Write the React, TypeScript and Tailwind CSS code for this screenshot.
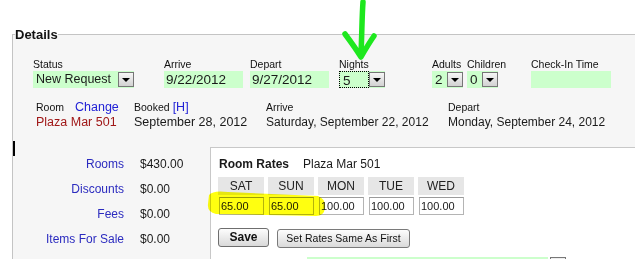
import React from "react";

const green = "bg-[#ccffcc]";

function DropBtn() {
    return (
        <div className="my-[1px] flex h-[15px] w-[16px] shrink-0 items-center justify-center border border-[#767676] bg-linear-to-b from-[#f6f6f6] to-[#d2d2d2]">
            <div className="h-0 w-0 border-x-[4px] border-t-[4px] border-x-transparent border-t-black" />
        </div>
    );
}

function Select({ value, width, focused, small }: { value: string; width: string; focused?: boolean; small?: boolean }) {
    return (
        <div className={`flex h-[17px] ${width} ${green}`}>
            <div
                className={`flex-1 overflow-hidden whitespace-nowrap pl-[3px] leading-[17px] ${small ? "text-[12.5px]" : "text-[13.5px]"} ${
                    focused ? "border border-dotted border-black leading-[15px] pl-[2px]" : ""
                }`}
            >
                {value}
            </div>
            <DropBtn />
        </div>
    );
}

function Label({ children }: { children: React.ReactNode }) {
    return <div className="text-[10.5px] leading-[13px] text-[#111]">{children}</div>;
}

const days = ["SAT", "SUN", "MON", "TUE", "WED"];
const rates = ["65.00", "65.00", "100.00", "100.00", "100.00"];

const totals = [
    { name: "Rooms", amount: "$430.00" },
    { name: "Discounts", amount: "$0.00" },
    { name: "Fees", amount: "$0.00" },
    { name: "Items For Sale", amount: "$0.00" },
];

export default function App() {
    return (
        <div className="relative h-[259px] w-[635px] overflow-hidden bg-white font-['Liberation_Sans',Arial,sans-serif] text-[#1a1a1a]">
            <fieldset className="ml-[12px] mt-[27px] w-[720px] border-l border-t border-[#c4c4c4] bg-[#f6f6f6] pb-[40px]">
                <legend className="ml-[2px] text-[13px] font-bold leading-[15px] text-[#111]">Details</legend>

                {/* reservation fields */}
                <div className="flex pl-[20px] pt-[16px]">
                    <div className="w-[131px]">
                        <Label>Status</Label>
                        <Select value="New Request" width="w-[101px]" small />
                    </div>
                    <div className="w-[86px]">
                        <Label>Arrive</Label>
                        <div className={`h-[17px] w-[79px] pl-[2px] text-[13.5px] leading-[17px] ${green}`}>9/22/2012</div>
                    </div>
                    <div className="w-[89px]">
                        <Label>Depart</Label>
                        <div className={`h-[17px] w-[79px] pl-[2px] text-[13.5px] leading-[17px] ${green}`}>9/27/2012</div>
                    </div>
                    <div className="w-[93px]">
                        <Label>Nights</Label>
                        <Select value="5" width="w-[46px]" focused />
                    </div>
                    <div className="w-[35px]">
                        <Label>Adults</Label>
                        <Select value="2" width="w-[31px]" />
                    </div>
                    <div className="w-[64px]">
                        <Label>Children</Label>
                        <Select value="0" width="w-[31px]" />
                    </div>
                    <div>
                        <Label>Check-In Time</Label>
                        <div className={`h-[17px] w-[80px] ${green}`} />
                    </div>
                </div>

                {/* booking summary */}
                <div className="flex pl-[23px] pt-[12px]">
                    <div className="w-[98px]">
                        <div className="flex items-end leading-[14px]">
                            <span className="text-[10.5px] text-[#111]">Room</span>
                            <span className="ml-[11px] text-[12.5px] text-[#2222d6]">Change</span>
                        </div>
                        <div className="text-[12.5px] leading-[16px] text-[#a01818]">Plaza Mar 501</div>
                    </div>
                    <div className="w-[132px]">
                        <div className="flex items-end leading-[14px]">
                            <span className="text-[10.5px] text-[#111]">Booked</span>
                            <span className="ml-[3px] text-[12.5px] text-[#2222d6]">[H]</span>
                        </div>
                        <div className="text-[12.5px] leading-[16px]">September 28, 2012</div>
                    </div>
                    <div className="w-[182px]">
                        <div className="text-[10.5px] leading-[14px] text-[#111]">Arrive</div>
                        <div className="text-[12px] leading-[16px]">Saturday, September 22, 2012</div>
                    </div>
                    <div>
                        <div className="text-[10.5px] leading-[14px] text-[#111]">Depart</div>
                        <div className="text-[12px] leading-[16px]">Monday, September 24, 2012</div>
                    </div>
                </div>

                <div className="mt-[17px] flex items-start">
                    {/* totals */}
                    <div className="w-[197px] pt-[10px]">
                        {totals.map((t) => (
                            <div key={t.name} className="flex h-[25px] text-[12px] leading-[15px]">
                                <div className="w-[111px] text-right text-[#2b2bbf]">{t.name}</div>
                                <div className="ml-[16px]">{t.amount}</div>
                            </div>
                        ))}
                    </div>

                    {/* room rates */}
                    <div className="flex-1 border-l border-t border-[#c8c8c8] bg-white pl-[7px] pt-[9px]">
                        <div className="flex text-[12px] leading-[15px]">
                            <span className="ml-[1px] font-bold">Room Rates</span>
                            <span className="ml-[14px]">Plaza Mar 501</span>
                        </div>
                        <div className="mt-[5px] flex gap-[4px]">
                            {days.map((d, i) => (
                                <div key={d} className="w-[46px]">
                                    <div className="h-[18px] bg-[#e6e6e6] text-center text-[12px] leading-[18px] text-[#222]">{d}</div>
                                    <div className="ml-[1px] mt-[2px] h-[18px] w-[45px] border border-[#b4b4b4] border-t-[#9a9a9a] bg-white pl-[1px] text-[11px] leading-[16px]">
                                        {rates[i]}
                                    </div>
                                </div>
                            ))}
                        </div>
                        <div className="mt-[13px] flex items-start">
                            <button className="h-[19px] w-[51px] rounded-[3px] border border-[#6e6e6e] bg-linear-to-b from-[#fdfdfd] to-[#d9d9d9] text-[12px] font-bold leading-[17px] text-[#111]">
                                Save
                            </button>
                            <button className="ml-[8px] mt-[1px] h-[19px] w-[133px] rounded-[3px] border border-[#7a7a7a] bg-linear-to-b from-[#fdfdfd] to-[#dadada] text-[10.5px] leading-[17px] text-[#111]">
                                Set Rates Same As First
                            </button>
                        </div>
                        <div className="ml-[89px] mt-[9px] flex">
                            <div className={`h-[17px] w-[241px] ${green}`} />
                            <div className="ml-[2px] h-[17px] w-[16px] border border-[#777] bg-[#eee]" />
                        </div>
                    </div>
                </div>
            </fieldset>

            {/* text caret */}
            <div className="absolute left-[13px] top-[141px] h-[15px] w-[2px] bg-black" />

            {/* hand-drawn green arrow */}
            <svg className="absolute left-[335px] top-0" width="50" height="64" viewBox="335 0 50 64">
                <path
                    d="M363 2 C362 15 362 30 361 55 M345 34 C351 42 356 49 361 57 C365 50 369 43 374 36"
                    fill="none"
                    stroke="#1ee81e"
                    strokeWidth="5.5"
                    strokeLinecap="round"
                    strokeLinejoin="round"
                />
            </svg>

            {/* yellow highlighter */}
            <svg className="absolute left-[205px] top-[188px] mix-blend-multiply" width="125" height="32" viewBox="205 188 125 32">
                <path
                    d="M209 195 Q213 190 228 192 L318 196 Q326 199 325 208 Q324 216 316 216 L216 214 Q207 212 208 204 Z"
                    fill="#ffff10"
                />
            </svg>
        </div>
    );
}
